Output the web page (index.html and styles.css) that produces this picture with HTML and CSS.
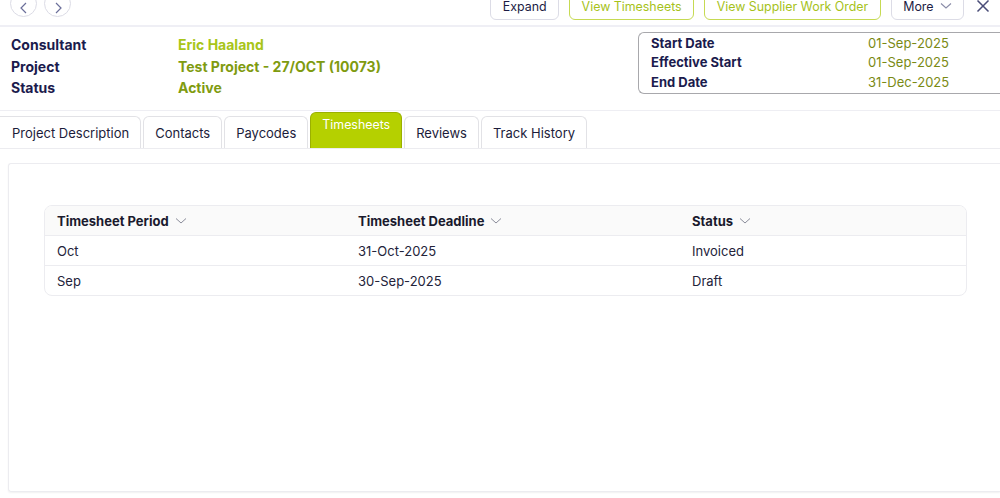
FILE: index.html
```html
<!DOCTYPE html>
<html>
<head>
<meta charset="utf-8">
<link rel="stylesheet" href="styles.css">
</head>
<body>
<div class="topbar">
  <div class="navs">
    <span class="circ"><svg width="10" height="12" viewBox="0 0 10 12"><path d="M7 1 L2 6 L7 11" fill="none" stroke="#6b6f9a" stroke-width="1.2"/></svg></span>
    <span class="circ"><svg width="10" height="12" viewBox="0 0 10 12"><path d="M3 1 L8 6 L3 11" fill="none" stroke="#6b6f9a" stroke-width="1.2"/></svg></span>
  </div>
  <div class="actions">
    <button class="btn">Expand</button>
    <button class="btn lime">View Timesheets</button>
    <button class="btn lime">View Supplier Work Order</button>
    <button class="btn">More <svg class="chev" width="12" height="8" viewBox="0 0 12 8"><path d="M1 1.5 L6 6 L11 1.5" fill="none" stroke="#8a8ca8" stroke-width="1.1"/></svg></button>
    <span class="close"><svg width="14" height="14" viewBox="0 0 14 14"><path d="M1.5 1.5 L12.5 12.5 M12.5 1.5 L1.5 12.5" stroke="#4a4d78" stroke-width="1.5"/></svg></span>
  </div>
</div>

<div class="info">
  <div class="fields">
    <div class="lbl">Consultant</div><div class="val light">Eric Haaland</div>
    <div class="lbl">Project</div><div class="val">Test Project - 27/OCT (10073)</div>
    <div class="lbl">Status</div><div class="val">Active</div>
  </div>
  <div class="dates">
    <div class="dl">Start Date</div><div class="dv">01-Sep-2025</div>
    <div class="dl">Effective Start</div><div class="dv">01-Sep-2025</div>
    <div class="dl">End Date</div><div class="dv">31-Dec-2025</div>
  </div>
</div>

<div class="tabs">
  <div class="tab">Project Description</div>
  <div class="tab">Contacts</div>
  <div class="tab">Paycodes</div>
  <div class="tab active">Timesheets</div>
  <div class="tab">Reviews</div>
  <div class="tab">Track History</div>
</div>

<div class="panel">
  <div class="table">
    <div class="row head">
      <div class="cell">Timesheet Period <svg class="hchev" width="12" height="8" viewBox="0 0 12 8"><path d="M1 1.5 L6 6 L11 1.5" fill="none" stroke="#8a8c9a" stroke-width="1"/></svg></div>
      <div class="cell">Timesheet Deadline <svg class="hchev" width="12" height="8" viewBox="0 0 12 8"><path d="M1 1.5 L6 6 L11 1.5" fill="none" stroke="#8a8c9a" stroke-width="1"/></svg></div>
      <div class="cell">Status <svg class="hchev" width="12" height="8" viewBox="0 0 12 8"><path d="M1 1.5 L6 6 L11 1.5" fill="none" stroke="#8a8c9a" stroke-width="1"/></svg></div>
    </div>
    <div class="row">
      <div class="cell">Oct</div>
      <div class="cell">31-Oct-2025</div>
      <div class="cell">Invoiced</div>
    </div>
    <div class="row last">
      <div class="cell">Sep</div>
      <div class="cell">30-Sep-2025</div>
      <div class="cell">Draft</div>
    </div>
  </div>
</div>
</body>
</html>
```

FILE: styles.css
```css
* { box-sizing: border-box; }
html, body { margin: 0; padding: 0; background: #fff; overflow: hidden; }
body {
  font-family: Inter, "Noto Sans", sans-serif;
  color: #1c1c3c;
  width: 1000px;
  height: 498px;
}
.topbar {
  height: 27px;
  border-bottom: 2px solid #efeff5;
  display: flex;
  justify-content: space-between;
  align-items: flex-start;
}
.navs { display: flex; gap: 7px; padding-left: 10px; margin-top: -10px; }
.circ {
  width: 27px; height: 27px;
  border: 1px solid #dcdce6;
  border-radius: 50%;
  display: flex; align-items: center; justify-content: center;
  padding-top: 8px;
}
.actions { display: flex; align-items: flex-start; gap: 10px; margin-top: -8px; padding-right: 10px; }
.btn {
  font-family: inherit;
  font-size: 12.4px;
  height: 28px;
  padding: 0 11.5px;
  background: #fff;
  border: 1px solid #dcdce6;
  border-radius: 6px;
  color: #1c1c44;
  display: flex; align-items: center; gap: 6px;
}
.btn.lime { border-color: #c6da52; color: #a6c21a; }
.chev { margin-top: -1px; }
.close { margin-left: 2px; margin-top: 5px; }

.info {
  height: 84px;
  border-bottom: 1px solid #eeeef3;
  display: flex;
  justify-content: space-between;
  padding-top: 5px;
}
.fields {
  display: grid;
  grid-template-columns: 167px auto;
  grid-auto-rows: 21.5px;
  padding-left: 11px;
  padding-top: 2px;
  font-size: 14px;
  font-weight: 700;
  align-items: center;
}
.lbl { color: #1b1b4d; }
.val { color: #7f9b10; }
.val.light { color: #a8c519; }
.dates {
  width: 362px;
  height: 62px;
  border: 1.5px solid #a8a8ac;
  border-right: none;
  border-radius: 6px 0 0 6px;
  display: grid;
  grid-template-columns: 217px auto;
  grid-auto-rows: 19.5px;
  align-items: center;
  padding: 0 0 0 12px;
  font-size: 13px;
}
.dl { font-weight: 700; color: #1b1b4d; }
.dv { color: #7a8a14; }

.tabs {
  display: flex;
  gap: 2px;
  align-items: flex-end;
  padding-top: 6px;
  border-bottom: 1px solid #ececf0;
  height: 38px;
}
.tab {
  height: 32px;
  padding: 0 11px;
  font-size: 13px;
  color: #1c1c3a;
  border: 1px solid #e2e2e6;
  border-bottom: none;
  border-radius: 6px 6px 0 0;
  display: flex; align-items: center;
  background: #fff;
}
.tab:first-child { border-left: none; border-radius: 0 6px 0 0; padding-left: 12px; }
.tab.active {
  height: 36px;
  background: #b5d000;
  color: #fff;
  border-color: #9bb000;
  align-items: flex-start;
  padding: 4px 11px 0;
  font-size: 12.4px;
}

.panel {
  margin: 14px 0 0 8px;
  height: 329px;
  border: 1px solid #ececf0;
  border-right: none;
  border-radius: 3px 0 0 3px;
  box-shadow: 0 1px 2px rgba(0,0,0,0.06);
  padding: 41px 33px 0 35px;
}
.table {
  border: 1px solid #ececf0;
  border-radius: 8px;
  overflow: hidden;
}
.row {
  display: grid;
  grid-template-columns: 301px 334px 1fr;
  height: 30px;
  align-items: center;
  border-bottom: 1px solid #ececf0;
  font-size: 13px;
  color: #23233a;
}
.row.last { border-bottom: none; height: 29px; }
.row.head { background: #fafafa; font-weight: 700; color: #1a1a2e; }
.cell { padding-left: 12px; display: flex; align-items: center; gap: 6px; }
.hchev { margin-top: 1px; }
```
